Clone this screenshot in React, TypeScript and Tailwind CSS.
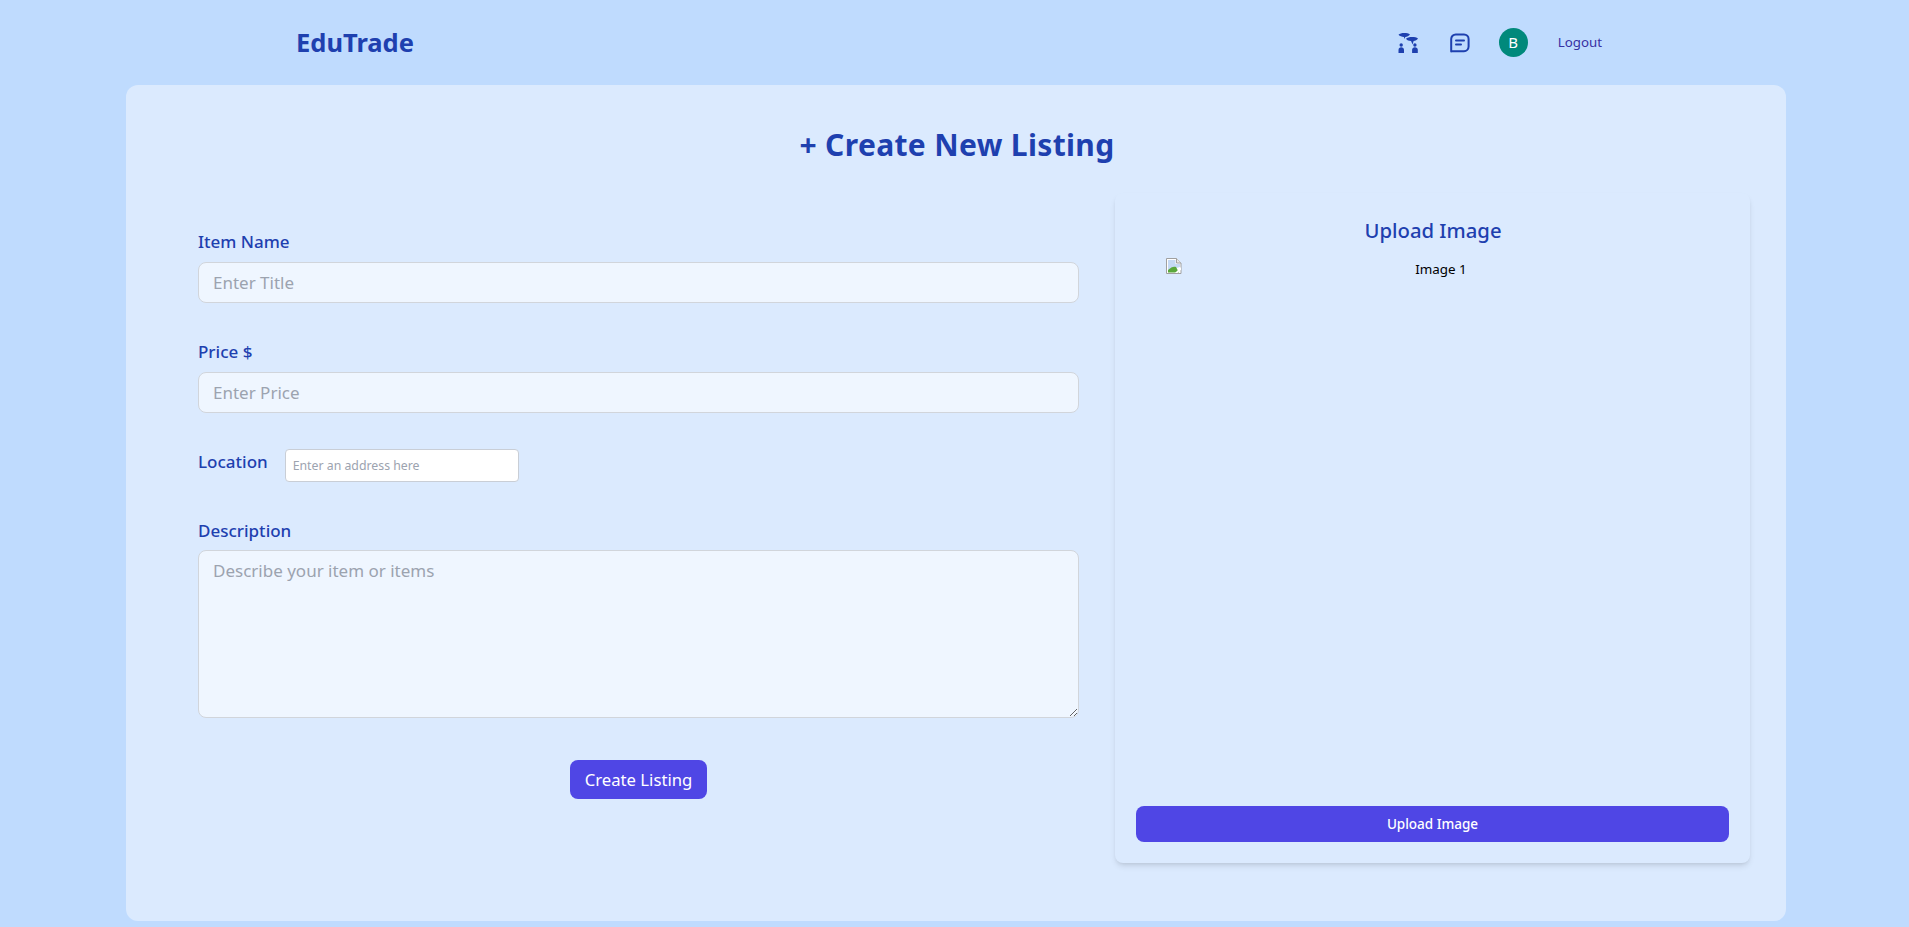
const FONT = "font-['Noto_Sans','Open_Sans',sans-serif]";

function PeopleIcon() {
  return (
    <svg width="20" height="20" viewBox="0 0 20 20" fill="#1e40af">
      <path d="M.5 1.8C2.5 -.4 9.5 -.4 12 1.6 10.8 3.2 9 3.9 7.4 3.9L6.2 6 6 3.9C3.8 3.9 1.8 3.2 .5 1.8Z" />
      <path d="M8 5.8C10 3.6 17.5 3.6 20 5.6 19 7.2 17.4 7.9 15.6 8L14.6 11.6 13 8C10.8 8 9 7.2 8 5.8Z" />
      <circle cx="3.2" cy="12" r="1.7" />
      <circle cx="16.9" cy="12" r="1.7" />
      <path d="M.5 20V17C.5 15.2 1.7 14.2 3.2 14.2S6 15.2 6 17V20Z" />
      <path d="M14.1 20V17C14.1 15.2 15.4 14.2 16.9 14.2S19.8 15.2 19.8 17V20Z" />
    </svg>
  );
}

function ChatIcon() {
  return (
    <svg width="20" height="20" viewBox="0 0 20 20" fill="none" stroke="#1e40af" strokeWidth="2" strokeLinecap="round">
      <path d="M1.2 18.4V6A4.6 4.6 0 0 1 5.8 1.4H14A4.6 4.6 0 0 1 18.6 6V13.6A4.6 4.6 0 0 1 14 18.2H1.6" strokeLinejoin="round" />
      <path d="M6 7.4H14" />
      <path d="M6 11.6H11" />
    </svg>
  );
}

function BrokenImage() {
  return (
    <svg width="16" height="16" viewBox="0 0 16 16" className="mt-[1px] shrink-0">
      <path d="M.5 .5H10.5L15 5V15.5H.5Z" fill="#fff" stroke="#a0a0a0" />
      <path d="M10.5 .5V5H15" fill="#e8e8e8" stroke="#a0a0a0" />
      <path d="M2 2H9.5V6H14V9L2 12.5Z" fill="#c5d9f5" />
      <path d="M2 14.5V12C5 9 8 8 10 9L13 14.5Z" fill="#5aa83c" />
      <path d="M9 15L15 9V11.5L11.5 15Z" fill="#fff" />
    </svg>
  );
}

function Label({ children }: { children: string }) {
  return <label className="block text-[17px] leading-[24px] font-medium text-[#1e40af]">{children}</label>;
}

const fieldClass =
  "mt-[8px] block h-[41px] w-full rounded-lg border border-[#d1d5db] bg-[#eff6ff] px-[14px] text-[17px] text-black outline-none placeholder:text-[#9ca3af]";

export default function App() {
  return (
    <div className={`${FONT} h-screen overflow-hidden bg-[#bfdbfe]`}>
      <header className="flex h-[85px] items-center pl-[296px] pr-[307px]">
        <div className="text-[25.5px] font-bold text-[#1e40af]">EduTrade</div>
        <nav className="ml-auto flex items-center">
          <PeopleIcon />
          <div className="ml-[32px]">
            <ChatIcon />
          </div>
          <div className="ml-[29px] flex h-[29px] w-[29px] items-center justify-center rounded-full bg-[#00897b] text-[15px] text-white">
            B
          </div>
          <a className="ml-[30px] text-[13.3px] text-[#3730a3]">Logout</a>
        </nav>
      </header>

      <main className="ml-[126px] mr-[123px] h-[836px] rounded-xl bg-[#dbeafe] px-[72px]">
        <h1 className="flex h-[118px] items-center justify-center pl-[2px] text-[30px] font-bold tracking-[0.35px] text-[#1e40af]">
          + Create New Listing
        </h1>

        <div className="-mt-[10px] flex gap-[36px]">
          <form className="w-[881px] shrink-0 pt-[37px]">
            <Label>Item Name</Label>
            <input className={fieldClass} placeholder="Enter Title" />

            <div className="mt-[37px]">
              <Label>Price $</Label>
              <input className={fieldClass} placeholder="Enter Price" />
            </div>

            <div className="mt-[36px] flex items-start">
              <div className="pt-[1px]">
                <Label>Location</Label>
              </div>
              <input
                className="ml-[17px] h-[33px] w-[234px] rounded border border-[#c9ced6] bg-white px-[7px] text-[12.3px] outline-none placeholder:text-[#9ca3af]"
                placeholder="Enter an address here"
              />
            </div>

            <div className="mt-[37px]">
              <Label>Description</Label>
              <textarea
                className="mt-[7px] block h-[168px] w-full rounded-lg border border-[#d1d5db] bg-[#eff6ff] px-[14px] py-[7px] text-[17px] outline-none placeholder:text-[#9ca3af]"
                placeholder="Describe your item or items"
              />
            </div>

            <div className="mt-[42px] flex justify-center">
              <button
                type="button"
                className="h-[39px] w-[137px] rounded-lg bg-[#4f46e5] text-[16.7px] text-white"
              >
                Create Listing
              </button>
            </div>
          </form>

          <aside className="-mr-[36px] flex h-[670px] flex-1 flex-col rounded-lg bg-[#dbeafe] px-[21px] pb-[21px] shadow-[0_4px_6px_-1px_rgba(0,0,0,0.1),0_2px_4px_-2px_rgba(0,0,0,0.1)]">
            <h2 className="mt-[21px] pl-[1px] text-center text-[20.3px] leading-[32px] font-medium text-[#1e40af]">
              Upload Image
            </h2>
            <div className="mt-[11px] flex flex-1 items-start pl-[30px]">
              <BrokenImage />
              <span className="flex-1 pt-[2px] pr-[29px] text-center text-[13.4px] leading-[20px] text-black">Image 1</span>
            </div>
            <button
              type="button"
              className="h-[36px] w-full rounded-lg bg-[#4f46e5] text-[13.5px] font-medium text-white"
            >
              Upload Image
            </button>
          </aside>
        </div>
      </main>
    </div>
  );
}
